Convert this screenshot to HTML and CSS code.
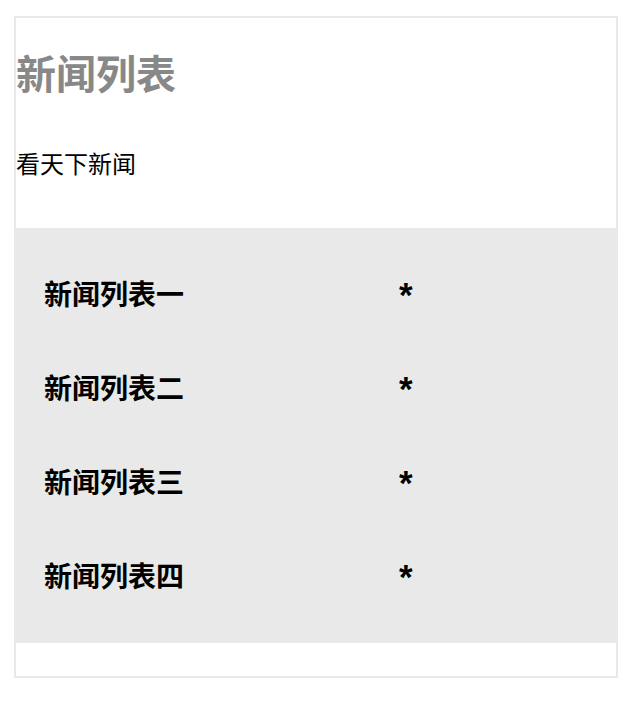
FILE: index.html
```html
<!DOCTYPE html>
<html lang="zh-CN">
<head>
<meta charset="utf-8">
<title>新闻列表</title>
<link rel="stylesheet" href="styles.css">
</head>
<body>
<div class="box">
  <h1 class="title">新闻列表</h1>
  <p class="sub">看天下新闻</p>
  <ul class="list">
    <li class="item"><span class="name">新闻列表一</span><span class="star">*</span></li>
    <li class="item"><span class="name">新闻列表二</span><span class="star">*</span></li>
    <li class="item"><span class="name">新闻列表三</span><span class="star">*</span></li>
    <li class="item"><span class="name">新闻列表四</span><span class="star">*</span></li>
  </ul>
  <div class="foot"></div>
</div>
</body>
</html>
```

FILE: styles.css
```css
html, body {
  margin: 0;
  padding: 0;
  background: #ffffff;
}
body {
  font-family: "Noto Sans CJK SC", "Liberation Sans", sans-serif;
  color: #000;
}
.box {
  margin: 16px 18px 0 14px;
  width: 600px;
  border: 2px solid #e8e8e8;
  background: #fff;
}
.title {
  margin: 30px 0 0 0;
  font-size: 40px;
  line-height: 48px;
  font-weight: bold;
  color: #888888;
}
.sub {
  margin: 51px 0 49px 0;
  font-size: 24px;
  line-height: 32px;
}
.list {
  list-style: none;
  margin: 0 -2px;
  padding: 18px 0 21px 0;
  background: #e9e9e9;
}
.item {
  display: grid;
  grid-template-columns: 355px auto;
  align-items: center;
  height: 94px;
  padding-left: 30px;
  font-size: 28px;
  font-weight: bold;
  line-height: 40px;
}
.star {
  font-family: "Liberation Sans", sans-serif;
  font-weight: bold;
  font-size: 35px;
  line-height: 40px;
  position: relative;
  top: 2px;
}
.foot {
  height: 33px;
}
```
